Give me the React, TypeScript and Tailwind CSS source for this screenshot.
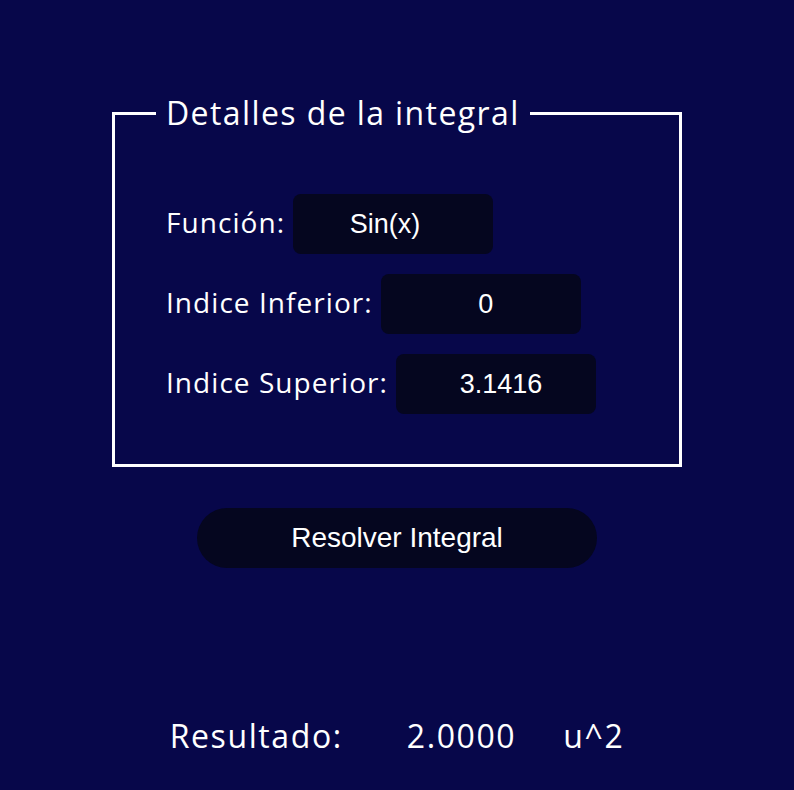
import { useState } from 'react'

const FIELDS = [
  { label: 'Función:', value: 'Sin(x)', pad: 'pr-[16px]' },
  { label: 'Indice Inferior:', value: '0', pad: 'pl-[10px]' },
  { label: 'Indice Superior:', value: '3.1416', pad: 'pl-[10px]' },
]

export default function App() {
  const [values, setValues] = useState(FIELDS.map((f) => f.value))

  return (
    <div className="min-h-[790px] w-full bg-[#07074a] text-white font-['Open_Sans',sans-serif] flex flex-col items-center pt-[92px]">
      <fieldset className="w-[570px] border-[3px] border-white">
        <legend className="ml-[41px] px-[10px] text-[32px] leading-[42px] tracking-[1.4px]">
          Detalles de la integral
        </legend>
        <div className="flex flex-col gap-[20px] px-[51px] pt-[60px] pb-[50px]">
          {FIELDS.map((f, i) => (
            <div key={f.label} className="flex items-center gap-[8px]">
              <span className="text-[28px] leading-[38px] tracking-[1.05px] -translate-y-[2px]">{f.label}</span>
              <input
                value={values[i]}
                onChange={(e) => setValues(values.map((v, j) => (j === i ? e.target.value : v)))}
                className={`w-[200px] h-[60px] rounded-[8px] bg-[#05061f] text-center text-[27px] font-['Liberation_Sans',sans-serif] text-white outline-none ${f.pad}`}
              />
            </div>
          ))}
        </div>
      </fieldset>

      <button className="mt-[41px] w-[400px] h-[60px] rounded-full bg-[#05061f] text-[28px] font-['Liberation_Sans',sans-serif] text-white">
        Resolver Integral
      </button>

      <div className="mt-[144px] flex items-center text-[32px] tracking-[1.6px]">
        <span>Resultado:</span>
        <span className="ml-[64px]">2.0000</span>
        <span className="ml-[47px]">u^2</span>
      </div>
    </div>
  )
}
